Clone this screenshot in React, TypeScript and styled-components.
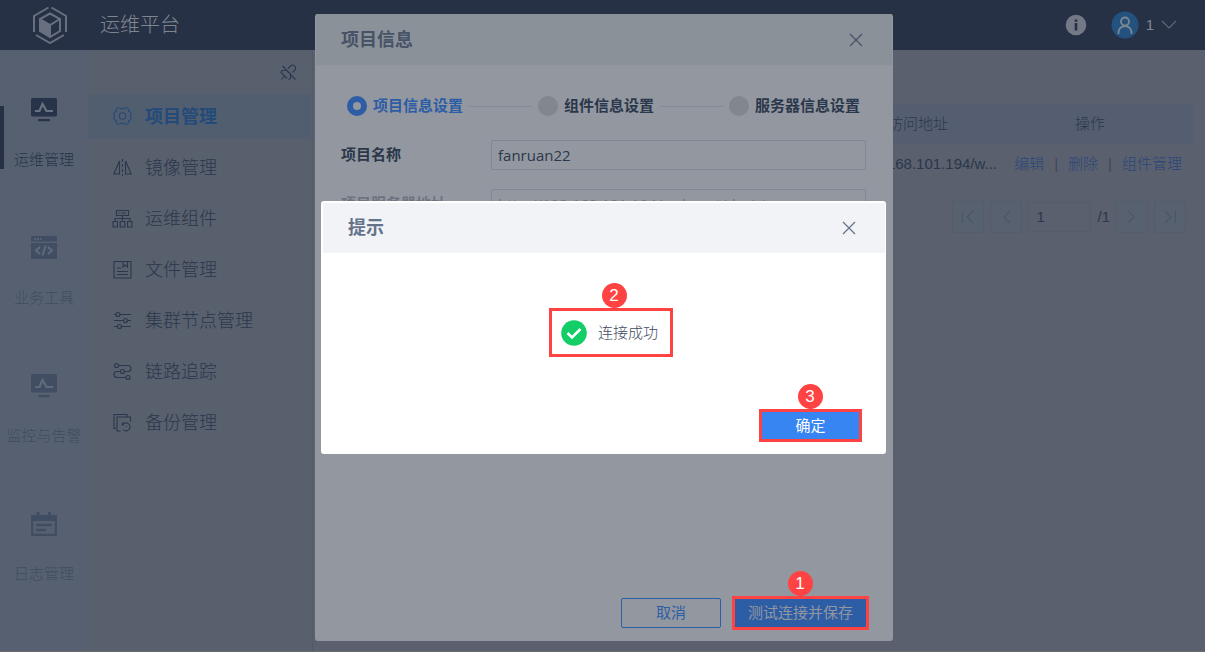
import React from "react";
import styled, { createGlobalStyle, css } from "styled-components";

const ink = "#2b374c";

const GlobalStyle = createGlobalStyle`
  *, *::before, *::after { box-sizing: border-box; }
  body {
    margin: 0;
    background: #5a606d;
    color: ${ink};
    font: 300 15px/20px "Liberation Sans", "Noto Sans CJK SC", sans-serif;
  }
  button, input { font: inherit; color: inherit; }
  button { padding: 0; border: 0; background: none; cursor: pointer; }
  a { color: inherit; text-decoration: none; }
  h1, h2, p, ul { margin: 0; padding: 0; }
  ul { list-style: none; }
  svg { display: block; flex: none; }
`;

const Page = styled.div`
  display: flex;
  flex-direction: column;
  min-height: 100vh;
  border-bottom: 1px solid #6a6c72;
`;

/* Top bar */
const TopBar = styled.header`
  display: flex;
  align-items: center;
  height: 50px;
  padding: 0 28px 0 32px;
  background: #273146;
  color: #808690;
`;
const Brand = styled.h1`
  flex: 1;
  margin-left: 32px;
  font-size: 20px;
  line-height: 28px;
  font-weight: 300;
`;
const Account = styled.button`
  display: flex;
  align-items: center;
  gap: 7px;
  margin-left: 24px;
`;

/* Left navigation */
const Body = styled.div`
  display: flex;
  flex: 1;
`;
const Rail = styled.nav`
  width: 88px;
  padding-top: 18px;
  background: #566070;
`;
const RailLink = styled.a<{ $active?: boolean }>`
  display: flex;
  flex-direction: column;
  align-items: center;
  justify-content: center;
  gap: 28px;
  height: 138px;
  padding-bottom: 6px;
  position: relative;
  white-space: nowrap;
  color: ${(p) => (p.$active ? "#273349" : "#414d62")};
  ${(p) =>
    p.$active &&
    css`
      &::before {
        content: "";
        position: absolute;
        left: 0;
        top: 38px;
        width: 4px;
        height: 63px;
        background: #273146;
      }
    `}
`;
const Menu = styled.nav`
  width: 225px;
  padding-right: 1px;
  background: #585f6d;
  border-right: 1px solid #515a68;
`;
const PinRow = styled.div`
  display: flex;
  align-items: center;
  justify-content: flex-end;
  height: 44px;
  padding-right: 14px;
`;
const MenuList = styled.ul`
  display: flex;
  flex-direction: column;
  gap: 6px;
`;
const MenuLink = styled.a<{ $active?: boolean }>`
  display: flex;
  align-items: center;
  gap: 12px;
  height: 45px;
  padding-left: 24px;
  font-size: 18px;
  line-height: 26px;
  ${(p) =>
    p.$active &&
    css`
      background: #515e70;
      color: #234a78;
      font-weight: 700;
    `}
`;

/* Project table */
const Main = styled.main`
  flex: 1;
  min-width: 0;
  padding: 54px 12px 0;
`;
const Table = styled.table`
  width: 100%;
  table-layout: fixed;
  border-collapse: collapse;
`;
const HeadCell = styled.th<{ $width?: number }>`
  width: ${(p) => (p.$width ? `${p.$width}px` : "auto")};
  height: 40px;
  padding: 0;
  background: #555e70;
  font-weight: 300;
  &:last-child { padding-right: 14px; }
`;
const Cell = styled.td`
  height: 41px;
  padding: 0 4px;
  border-bottom: 1px solid #556071;
  text-align: right;
  white-space: nowrap;
`;
const Actions = styled.div`
  display: flex;
  justify-content: flex-end;
  gap: 10px;
  padding-right: 7px;
  color: #2b4779;
`;
const Divider = styled.span`
  color: #3d4859;
`;
const Pager = styled.div`
  display: flex;
  align-items: center;
  justify-content: flex-end;
  gap: 6px;
  padding: 15px 7px 0 0;
`;
const PagerButton = styled.button`
  display: grid;
  place-items: center;
  width: 32px;
  height: 32px;
  border: 1px solid #545d6a;
  border-radius: 2px;
  background: #586170;
  color: #4a5768;
`;
const PagerInput = styled.input`
  width: 63px;
  height: 30px;
  padding: 0 7px;
  border: 1px solid #545d6a;
  border-radius: 2px;
  background: transparent;
`;

/* Dialogs */
const Layer = styled.div<{ $nudge: number }>`
  position: fixed;
  inset: 0;
  display: flex;
  align-items: center;
  justify-content: center;
  padding: 3px 0 0 ${(p) => p.$nudge}px;
`;
const ProjectDialog = styled.section`
  display: flex;
  flex-direction: column;
  width: 578px;
  max-width: 100%;
  height: calc(100% - 22px);
  padding: 0 1px 11px;
  border-radius: 3px;
  background: #93979f;
`;
const PromptDialog = styled.section`
  display: flex;
  flex-direction: column;
  width: 565px;
  max-width: 100%;
  padding: 2px 1px 12px 2px;
  border-radius: 3px;
  background: #fff;
`;
const DialogHeader = styled.header<{ $light?: boolean }>`
  display: flex;
  align-items: center;
  justify-content: space-between;
  height: ${(p) => (p.$light ? 50 : 51)}px;
  padding: 0 29px 0 25px;
  background: ${(p) => (p.$light ? "#f2f3f7" : "#8b9199")};
  color: ${(p) => (p.$light ? "#65738a" : "#475367")};
`;
const DialogTitle = styled.h2`
  font-size: 18px;
  line-height: 26px;
  font-weight: 700;
`;
const Steps = styled.div`
  display: flex;
  align-items: center;
  gap: 6px;
  padding: 31px 32px 0 31px;
  font-weight: 700;
`;
const StepDot = styled.span<{ $active?: boolean }>`
  width: 20px;
  height: 20px;
  border-radius: 50%;
  background: #82868d;
  ${(p) =>
    p.$active &&
    css`
      border: 6px solid #2d5da5;
      background: #93979f;
    `}
`;
const StepName = styled.span<{ $active?: boolean }>`
  color: ${(p) => (p.$active ? "#2d5da5" : ink)};
`;
const StepLine = styled.span`
  flex: 1;
  height: 1px;
  background: #838a98;
`;
const Form = styled.form`
  display: flex;
  flex: 1;
  flex-direction: column;
  gap: 19px;
  padding: 24px 26px 0 25px;
`;
const Field = styled.div`
  display: flex;
  align-items: center;
`;
const FieldLabel = styled.label<{ $muted?: boolean }>`
  width: 150px;
  font-weight: 700;
  color: ${(p) => (p.$muted ? "#6c7480" : ink)};
`;
const TextInput = styled.input`
  flex: 1;
  min-width: 0;
  height: 30px;
  padding: 0 6px;
  border: 1px solid #7f8795;
  border-radius: 2px;
  background: transparent;
  font-family: "Open Sans", "Noto Sans CJK SC", sans-serif;
  font-weight: 400;
  &:disabled { color: #6c7480; }
`;
const DialogFooter = styled.footer`
  display: flex;
  align-items: center;
  justify-content: flex-end;
  gap: 11px;
  padding-right: 23px;
`;
const OutlineButton = styled.button`
  width: 100px;
  height: 30px;
  border: 1px solid #2d5da5;
  border-radius: 2px;
  color: #2d5da5;
  font-weight: 400;
`;
const SolidButton = styled.button<{ $bright?: boolean }>`
  width: ${(p) => (p.$bright ? 97 : 131)}px;
  height: ${(p) => (p.$bright ? 27 : 28)}px;
  background: ${(p) => (p.$bright ? "#3685f2" : "#2d5da5")};
  color: ${(p) => (p.$bright ? "#fff" : "#93979f")};
  font-weight: 400;
`;
const Result = styled.div`
  display: flex;
  justify-content: center;
  padding: 55px 0 52px 14px;
`;
const ResultMessage = styled.p`
  display: flex;
  align-items: center;
  gap: 11px;
  width: 118px;
  height: 43px;
  padding-left: 9px;
  color: #3d4a60;
`;
const Marked = styled.div`
  position: relative;
  border: 3px solid #ff4242;
`;
const Badge = styled.span<{ $at?: number }>`
  position: absolute;
  bottom: 100%;
  left: ${(p) => p.$at ?? 50}%;
  width: 25px;
  height: 25px;
  margin: 0 0 3px -13px;
  border-radius: 50%;
  background: #ff4242;
  color: #fff;
  font: 400 17px/25px "Liberation Sans", sans-serif;
  text-align: center;
`;

const Logo = () => (
  <svg width="36" height="38" viewBox="0 0 36 38" fill="none" stroke="#687080" strokeWidth="2">
    <path d="M16.500 1.500 2 10v16M19.500 1.500 34 10v16M4 29l14 8 14-8" />
    <path d="m18 7.500 10 5.500v12l-10 6-10-6V13ZM8 13l10 6 10-6M18 19v12" />
    <path d="m7.500 13 10.500 6v12L7.500 25Z" fill="#687080" stroke="none" />
  </svg>
);

const InfoIcon = () => (
  <svg width="22" height="22" viewBox="0 0 22 22">
    <circle cx="11" cy="11" r="10.300" fill="#737a86" />
    <path d="M9.700 5.500h2.600v2.200H9.700zM9.700 9h2.600v7.500H9.700z" fill="#273146" />
  </svg>
);

const Avatar = () => (
  <svg width="28" height="28" viewBox="0 0 28 28" fill="none" stroke="#7c8792" strokeWidth="1.800">
    <circle cx="14" cy="14" r="13.500" fill="#23527f" stroke="none" />
    <circle cx="14" cy="10.500" r="4" />
    <path d="M7.500 23v-1.500a6.500 6.500 0 0 1 13 0V23" />
  </svg>
);

const Chevron = () => (
  <svg width="16" height="10" viewBox="0 0 16 10" fill="none" stroke="#5f6877" strokeWidth="1.2">
    <path d="m1 1 7 7 7-7" />
  </svg>
);

const MonitorIcon = ({ line }: { line: string }) => (
  <svg width="26" height="24" viewBox="0 0 26 24">
    <rect width="26" height="18.500" rx="1.500" fill="currentColor" />
    <path d="M4 13h4.500L11.500 6l4 7H22" fill="none" stroke={line} strokeWidth="2.200" />
    <rect x="7" y="21" width="12" height="2.200" rx="1" fill="currentColor" />
  </svg>
);

const CodeIcon = () => (
  <svg width="26" height="24" viewBox="0 0 26 24">
    <path d="M1 0h24a1 1 0 0 1 1 1v4.500H0V1a1 1 0 0 1 1-1ZM0 7h26v15a1 1 0 0 1-1 1H1a1 1 0 0 1-1-1Z" fill="currentColor" />
    <path d="M3 3h2M6 3h2M9 3h1.500" stroke="#606a79" strokeWidth="1.500" />
    <path d="m9 11-4 3.500L9 18M17 11l4 3.500-4 3.500M14.800 9.500l-3.500 10" fill="none" stroke="#606a79" strokeWidth="2" />
  </svg>
);

const LogIcon = () => (
  <svg width="26" height="24" viewBox="0 0 26 24" fill="none" stroke="currentColor">
    <path d="M1.200 4v18.800h23.600V4" strokeWidth="2.200" />
    <path d="M0 3h26v6H0ZM5.500 0h3v4h-3ZM17 0h3v4h-3Z" fill="currentColor" stroke="none" />
    <path d="M6 13h14M6 18h8" strokeWidth="2.400" strokeLinecap="round" />
  </svg>
);

const PinIcon = () => (
  <svg width="17" height="17" viewBox="0 0 17 17" fill="none" stroke={ink} strokeWidth="1.100">
    <path d="m2.500 2 13 13.500M8 4.500 10.500 2c2.500-2.500 6.500 1 4.500 4l-2.500 2.500M10.500 11v3.500L8.500 15.500M5.500 6.500H2L1 8.500l6 6M4.500 12 1.500 15.500" />
  </svg>
);

const menuDrawings: Record<string, React.ReactNode> = {
  gear: (
    <>
      <circle cx="10.500" cy="10" r="3.200" />
      <path d="M8.500 3Q10.500 1.500 12.500 3Q14.500 0.800 16 2.500Q17 4 16.800 5.500Q19.500 6 19 8.500Q18 10 19 11.500Q19.500 14 16.800 14.500Q17 16 16 17.500Q14.500 19.200 12.500 17Q10.500 18.500 8.500 17Q6.500 19.200 5 17.500Q4 16 4.200 14.500Q1.500 14 2 11.500Q3 10 2 8.500Q1.500 6 4.200 5.500Q4 4 5 2.500Q6.500 0.800 8.500 3Z" />
    </>
  ),
  mirror: <path d="M7.500 4v13H1.800ZM13.500 4v13h5.700ZM10.500 2v3M10.500 7v3M10.500 12v3M10.500 17v2" />,
  nodes: (
    <path d="M4.500 2.500h12v5h-12ZM6.500 5h1M9 5h5M10.500 7.500V13M3 13v-2.500h15V13M1 13.500h4.500V19H1ZM8.200 13.500h4.600V19H8.200ZM15.500 13.500H20V19h-4.500Z" />
  ),
  file: <path d="M2 2.500h17V19H2ZM11 2.500V8l2.200-2 2.300 2V2.500M5 9h4M5 12.500h11M5 15.500h11" />,
  sliders: (
    <>
      <path d="M2 4.500h2M8 4.500h11M2 10.500h9.500M15.500 10.500H19M2 16.500h3.500M9.500 16.500H19" />
      <circle cx="6" cy="4.500" r="2" />
      <circle cx="13.500" cy="10.500" r="2" />
      <circle cx="7.500" cy="16.500" r="2" />
    </>
  ),
  trace: (
    <>
      <path d="M6.500 4.500h9.500a3 3 0 0 1 0 6h-3.500M8.500 10.500H5a3 3 0 0 0 0 6h9" />
      <circle cx="4.500" cy="4.500" r="2" />
      <circle cx="10.500" cy="10.500" r="2" />
      <circle cx="16" cy="16.500" r="2" />
    </>
  ),
  backup: (
    <path d="M4 16.500H2V2.500h13V5M8.500 19H5V5h13.500v4.500M11 10v4M9.500 12H12M11 17.500a4 4 0 1 0-.5-4.500M14.500 14v1" />
  ),
};

const MenuIcon = ({ name }: { name: string }) => (
  <svg width="21" height="21" viewBox="0 0 21 21" fill="none" stroke="currentColor" strokeWidth="1.100">
    {menuDrawings[name]}
  </svg>
);

const PageArrow = ({ flip, edge }: { flip?: boolean; edge?: boolean }) => (
  <svg width="14" height="14" viewBox="0 0 14 14" fill="none" stroke="currentColor" strokeWidth="1.200">
    <g transform={flip ? "matrix(-1 0 0 1 14 0)" : undefined}>
      <path d={edge ? "M1.500 1v12M12 1 6 7l6 6" : "m11 1-6 6 6 6"} />
    </g>
  </svg>
);

const CloseIcon = () => (
  <svg width="14" height="14" viewBox="0 0 14 14" fill="none" stroke="currentColor" strokeWidth="1.300">
    <path d="m1 1 12 12M13 1 1 13" />
  </svg>
);

const SuccessIcon = () => (
  <svg width="26" height="26" viewBox="0 0 26 26" fill="none">
    <circle cx="13" cy="13" r="12.800" fill="#13ce66" />
    <path d="m6.500 13 4.500 4.500 8.500-8.500" stroke="#fff" strokeWidth="2.600" />
  </svg>
);

const railItems = [
  { name: "运维管理", icon: <MonitorIcon line="#69727f" />, active: true },
  { name: "业务工具", icon: <CodeIcon /> },
  { name: "监控与告警", icon: <MonitorIcon line="#606a79" /> },
  { name: "日志管理", icon: <LogIcon /> },
];

const menuItems = [
  { name: "项目管理", icon: "gear", active: true },
  { name: "镜像管理", icon: "mirror" },
  { name: "运维组件", icon: "nodes" },
  { name: "文件管理", icon: "file" },
  { name: "集群节点管理", icon: "sliders" },
  { name: "链路追踪", icon: "trace" },
  { name: "备份管理", icon: "backup" },
];

export default function App() {
  return (
    <>
      <GlobalStyle />
      <Page>
        <TopBar>
          <Logo />
          <Brand>运维平台</Brand>
          <button aria-label="信息"><InfoIcon /></button>
          <Account>
            <Avatar />
            1
            <Chevron />
          </Account>
        </TopBar>
        <Body>
          <Rail>
            {railItems.map((item) => (
              <RailLink key={item.name} href="#" $active={item.active}>
                {item.icon}
                {item.name}
              </RailLink>
            ))}
          </Rail>
          <Menu>
            <PinRow>
              <button aria-label="固定菜单"><PinIcon /></button>
            </PinRow>
            <MenuList>
              {menuItems.map((item) => (
                <li key={item.name}>
                  <MenuLink href="#" $active={item.active}>
                    <MenuIcon name={item.icon} />
                    {item.name}
                  </MenuLink>
                </li>
              ))}
            </MenuList>
          </Menu>
          <Main>
            <Table>
              <thead>
                <tr>
                  <HeadCell />
                  <HeadCell $width={166}>访问地址</HeadCell>
                  <HeadCell $width={192}>操作</HeadCell>
                </tr>
              </thead>
              <tbody>
                <tr>
                  <Cell />
                  <Cell>192.168.101.194/w...</Cell>
                  <Cell>
                    <Actions>
                      <a href="#">编辑</a>
                      <Divider>|</Divider>
                      <a href="#">删除</a>
                      <Divider>|</Divider>
                      <a href="#">组件管理</a>
                    </Actions>
                  </Cell>
                </tr>
              </tbody>
            </Table>
            <Pager>
              <PagerButton aria-label="首页"><PageArrow edge /></PagerButton>
              <PagerButton aria-label="上一页"><PageArrow /></PagerButton>
              <PagerInput aria-label="页码" defaultValue="1" />
              <span>/1</span>
              <PagerButton aria-label="下一页"><PageArrow flip /></PagerButton>
              <PagerButton aria-label="末页"><PageArrow flip edge /></PagerButton>
            </Pager>
          </Main>
        </Body>
      </Page>

      <Layer $nudge={3}>
        <ProjectDialog role="dialog" aria-labelledby="project-title">
          <DialogHeader>
            <DialogTitle id="project-title">项目信息</DialogTitle>
            <button aria-label="关闭"><CloseIcon /></button>
          </DialogHeader>
          <Steps>
            <StepDot $active />
            <StepName $active>项目信息设置</StepName>
            <StepLine />
            <StepDot />
            <StepName>组件信息设置</StepName>
            <StepLine />
            <StepDot />
            <StepName>服务器信息设置</StepName>
          </Steps>
          <Form id="project-form" onSubmit={(e) => e.preventDefault()}>
            <Field>
              <FieldLabel htmlFor="project-name">项目名称</FieldLabel>
              <TextInput id="project-name" defaultValue="fanruan22" />
            </Field>
            <Field>
              <FieldLabel htmlFor="project-url" $muted>项目服务器地址</FieldLabel>
              <TextInput id="project-url" disabled defaultValue="http://192.168.101.194/webroot/decision" />
            </Field>
          </Form>
          <DialogFooter>
            <OutlineButton>取消</OutlineButton>
            <Marked>
              <Badge>1</Badge>
              <SolidButton form="project-form">测试连接并保存</SolidButton>
            </Marked>
          </DialogFooter>
        </ProjectDialog>
      </Layer>

      <Layer $nudge={2}>
        <PromptDialog role="alertdialog" aria-labelledby="prompt-title">
          <DialogHeader $light>
            <DialogTitle id="prompt-title">提示</DialogTitle>
            <button aria-label="关闭"><CloseIcon /></button>
          </DialogHeader>
          <Result>
            <Marked>
              <Badge $at={53}>2</Badge>
              <ResultMessage>
                <SuccessIcon />
                连接成功
              </ResultMessage>
            </Marked>
          </Result>
          <DialogFooter>
            <Marked>
              <Badge>3</Badge>
              <SolidButton $bright>确定</SolidButton>
            </Marked>
          </DialogFooter>
        </PromptDialog>
      </Layer>
    </>
  );
}
